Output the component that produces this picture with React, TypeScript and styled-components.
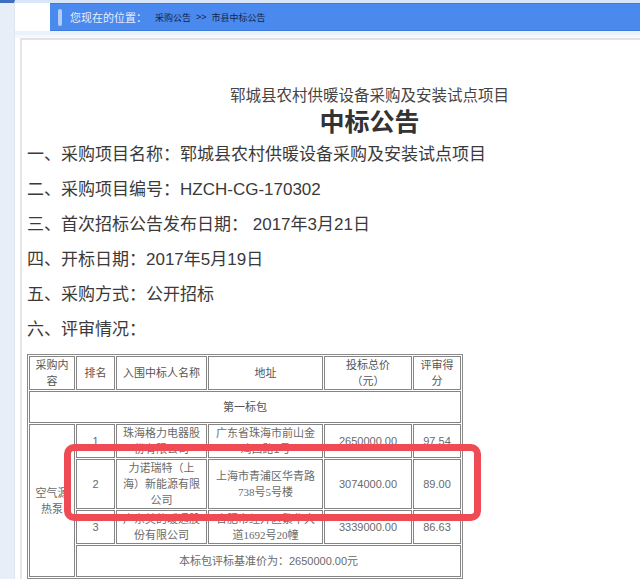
import React from 'react';
import styled, { createGlobalStyle } from 'styled-components';

const GlobalStyle = createGlobalStyle`
  html, body { margin: 0; padding: 0; background: #fff; overflow: hidden; }
  body {
    font-family: "Liberation Sans", "Noto Sans CJK SC", sans-serif;
    text-spacing-trim: space-all;
  }
`;

const Page = styled.div`
  display: flex;
  width: 640px;
  height: 579px;
  overflow: hidden;
  background: #fff;
`;

const LeftRail = styled.div`
  flex: 0 0 15px;
  box-sizing: border-box;
  background: #e8eef8;
  border-top: 3px solid #3e6fc0;
  border-right: 1px solid #dfe5ee;
`;

const Main = styled.div`
  flex: 0 0 697px;
  display: flex;
  flex-direction: column;
`;

const TopBand = styled.div`
  height: 5px;
  background: #d9e6f9;
`;

const BarRow = styled.div`
  padding-left: 35px;
`;

const Bar = styled.div`
  box-sizing: border-box;
  height: 28px;
  background: #4a89ee;
  border-top: 1px solid #3f7bdc;
  border-bottom: 1px solid #3f7bdc;
  display: flex;
  align-items: center;
  padding-left: 8px;
`;

const BarMark = styled.span`
  width: 4px;
  height: 17px;
  border-radius: 2px;
  background: #b3cdf6;
  margin-right: 8px;
`;

const BarLabel = styled.span`
  font-size: 11px;
  color: #e4eefd;
  margin-right: 8px;
`;

const Crumb = styled.span`
  font-size: 9px;
  color: #15264a;
  margin-right: 5px;
`;

const Gap = styled.div`
  height: 11px;
  background: linear-gradient(#eaf2fd 0, #eaf2fd 4px, #f8f8f5 4px);
`;

const Panel = styled.div`
  margin-left: 5px;
  flex: 1;
  border-top: 2px solid #e3e3e3;
  border-left: 2px solid #e6e6e6;
  background: #fff;
  padding: 45px 0 0 5px;
`;

const Subtitle = styled.div`
  text-align: center;
  font-size: 15.5px;
  line-height: 22px;
  color: #444;
`;

const Title = styled.div`
  text-align: center;
  font-size: 25px;
  line-height: 30px;
  font-weight: bold;
  color: #333;
`;

const Item = styled.div`
  font-size: 17px;
  line-height: 35px;
  color: #3a3a3a;
  white-space: nowrap;
`;

const TableWrap = styled.div`
  position: relative;
  width: 436px;
  margin-top: 7px;
`;

const Table = styled.table`
  table-layout: fixed;
  width: 436px;
  border-collapse: separate;
  border-spacing: 1px;
  border: 1px solid #8a8a8a;
  font-size: 11px;
  line-height: 16px;
  color: #6a6a6a;
`;

const Cell = styled.td<{ $head?: boolean }>`
  border: 1px solid #858585;
  padding: 0 3px;
  height: 30px;
  text-align: center;
  vertical-align: middle;
  color: ${p => (p.$head ? '#555' : '#6a6a6a')};
`;

const Serif = styled.span`
  font-family: "Liberation Serif", "Noto Sans CJK SC", serif;
`;

const Highlight = styled.div`
  position: absolute;
  left: 37px;
  top: 90px;
  width: 417px;
  height: 77px;
  box-sizing: border-box;
  border: 7px solid #ee4b55;
  border-radius: 10px;
  pointer-events: none;
`;

export default function App() {
  return (
    <>
      <GlobalStyle />
      <Page>
        <LeftRail />
        <Main>
          <TopBand />
          <BarRow>
            <Bar>
              <BarMark />
              <BarLabel>您现在的位置：</BarLabel>
              <Crumb>采购公告</Crumb>
              <Crumb>&gt;&gt;</Crumb>
              <Crumb>市县中标公告</Crumb>
            </Bar>
          </BarRow>
          <Gap />
          <Panel>
            <Subtitle>郓城县农村供暖设备采购及安装试点项目</Subtitle>
            <Title>中标公告</Title>
            <Item>一、采购项目名称：郓城县农村供暖设备采购及安装试点项目</Item>
            <Item>二、采购项目编号：HZCH-CG-170302</Item>
            <Item>三、首次招标公告发布日期： 2017年3月21日</Item>
            <Item>四、开标日期：2017年5月19日</Item>
            <Item>五、采购方式：公开招标</Item>
            <Item>六、评审情况：</Item>
            <TableWrap>
              <Table>
                <colgroup>
                  <col style={{ width: 46 }} />
                  <col style={{ width: 39 }} />
                  <col style={{ width: 91 }} />
                  <col style={{ width: 115 }} />
                  <col style={{ width: 88 }} />
                  <col style={{ width: 48 }} />
                </colgroup>
                <tbody>
                  <tr>
                    <Cell $head>采购内容</Cell>
                    <Cell $head>排名</Cell>
                    <Cell $head>入围中标人名称</Cell>
                    <Cell $head>地址</Cell>
                    <Cell $head>投标总价<br />（元）</Cell>
                    <Cell $head>评审得分</Cell>
                  </tr>
                  <tr>
                    <Cell $head colSpan={6}>第一标包</Cell>
                  </tr>
                  <tr>
                    <Cell rowSpan={4}>空气源热泵</Cell>
                    <Cell>1</Cell>
                    <Cell>珠海格力电器股份有限公司</Cell>
                    <Cell>广东省珠海市前山金鸡西路1号</Cell>
                    <Cell>2650000.00</Cell>
                    <Cell>97.54</Cell>
                  </tr>
                  <tr>
                    <Cell>2</Cell>
                    <Cell>力诺瑞特（上海）新能源有限公司</Cell>
                    <Cell>上海市青浦区华青路<Serif>738号5号楼</Serif></Cell>
                    <Cell>3074000.00</Cell>
                    <Cell>89.00</Cell>
                  </tr>
                  <tr>
                    <Cell>3</Cell>
                    <Cell>广东美的暖通股份有限公司</Cell>
                    <Cell>合肥市经开区繁华大<Serif>道1692号20幢</Serif></Cell>
                    <Cell>3339000.00</Cell>
                    <Cell>86.63</Cell>
                  </tr>
                  <tr>
                    <Cell colSpan={5}>本标包评标基准价为：2650000.00元</Cell>
                  </tr>
                </tbody>
              </Table>
              <Highlight />
            </TableWrap>
          </Panel>
        </Main>
      </Page>
    </>
  );
}
